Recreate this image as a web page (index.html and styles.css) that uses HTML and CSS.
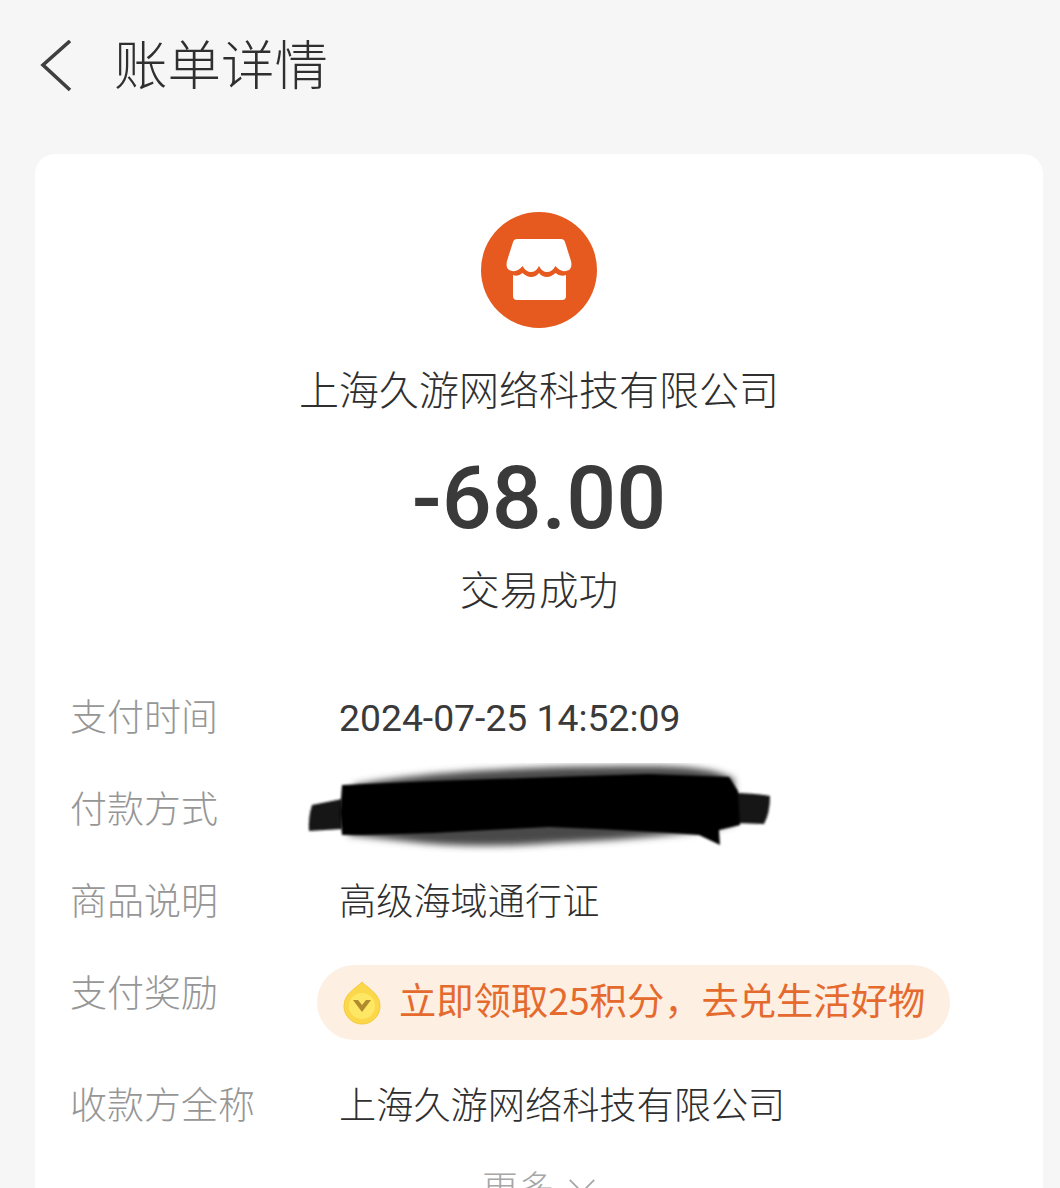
FILE: index.html
```html
<!DOCTYPE html>
<html lang="zh-CN">
<head>
<meta charset="utf-8">
<title>账单详情</title>
<link rel="stylesheet" href="styles.css">
</head>
<body>
<header class="topbar">
  <svg class="back" viewBox="0 0 34 54" width="34" height="54"><path d="M30 1 L3 25 L30 50" fill="none" stroke="#3f3f3f" stroke-width="3.600"/></svg>
  <h1 class="title">账单详情</h1>
</header>
<main class="card">
  <section class="summary">
    <svg class="shop" viewBox="0 0 116 116" width="116" height="116">
      <circle cx="58" cy="58" r="58" fill="#e6591f"/>
      <path d="M36 27 H80 Q83 27 84 30 L90 49 Q92 58 85 59 Q79 60 74.500 54 Q71 60 66 60 Q61 60 58 54 Q55 60 50 60 Q45 60 41.500 54 Q37 60 31 59 Q24 58 26 49 L32 30 Q33 27 36 27 Z" fill="#fff"/>
      <path d="M32 63 Q37 65 41.500 61 Q46 65 50 65 Q55 65 58 61 Q61 65 66 65 Q70 65 74.500 61 Q79 65 85 63 V84 Q85 88 81 88 H36 Q32 88 32 84 Z" fill="#fff"/>
    </svg>
    <div class="merchant">上海久游网络科技有限公司</div>
    <div class="amount">-68.00</div>
    <div class="status">交易成功</div>
  </section>
  <dl class="details">
    <div class="row"><dt>支付时间</dt><dd class="date">2024-07-25 14:52:09</dd></div>
    <div class="row"><dt>付款方式</dt><dd class="hidden-value">
      <svg class="scribble" viewBox="0 0 470 90" width="470" height="90">
        <defs><filter id="soft" x="-5%" y="-20%" width="110%" height="140%"><feGaussianBlur stdDeviation="1.200"/></filter><filter id="softer" x="-5%" y="-30%" width="110%" height="160%"><feGaussianBlur stdDeviation="3.500"/></filter></defs>
        <path d="M50 22 C120 8 230 3 340 3 C380 3 410 5 430 16 L432 60 C390 72 330 76 250 80 C200 84 150 84 100 78 L44 72 Z" fill="#4a4a4a" filter="url(#softer)"/>
        <path d="M8 42 L38 36 V66 L5 68 Q4 55 8 42 Z" fill="#151515" filter="url(#soft)"/>
        <path d="M430 30 Q450 30 466 33 Q466 50 460 61 L430 60 Z" fill="#151515" filter="url(#soft)"/>
        <path d="M38 22 L130 18 L280 13 L345 11 L425 14 L434 28 L436 62 L415 67 L416 82 L395 72 C340 68 290 66 245 64 L130 70 L60 72 L38 72 L36 50 Z" fill="#000" filter="url(#soft)"/>
      </svg>
    </dd></div>
    <div class="row"><dt>商品说明</dt><dd>高级海域通行证</dd></div>
    <div class="row row-reward"><dt>支付奖励</dt><dd>
      <div class="pill">
        <svg class="coin" viewBox="0 0 40 44" width="40" height="44">
          <path d="M20 1 C24 6 38 12 38 25 A18 18 0 0 1 2 25 C2 12 16 6 20 1 Z" fill="#fbd84a" stroke="#f6c93a" stroke-width="1"/>
          <circle cx="20" cy="25" r="13" fill="#ffe766"/>
          <path d="M11 19 L20 31 L29 19 L24 19 L20 24 L16 19 Z" fill="#b08a2c"/>
        </svg>
        <span class="pill-text">立即领取25积分，去兑生活好物</span>
      </div>
    </dd></div>
    <div class="row row-payee"><dt>收款方全称</dt><dd>上海久游网络科技有限公司</dd></div>
  </dl>
  <div class="more"><span>更多</span>
    <svg viewBox="0 0 32 20" width="28" height="18"><path d="M2 3 L16 17 L30 3" fill="none" stroke="#a6a6a6" stroke-width="2"/></svg>
  </div>
</main>
</body>
</html>
```
FILE: styles.css
```css
* { box-sizing: border-box; }
html, body { margin: 0; height: 1188px; overflow: hidden; }
body {
  background: #f6f6f6;
  color: #333;
  font-family: "Noto Sans CJK SC", "Noto Sans", sans-serif;
  font-weight: 300;
}
.topbar {
  height: 154px;
  display: flex;
  align-items: flex-start;
  padding: 40px 0 0 40px;
}
.title {
  margin: -21px 0 0 40px;
  font-size: 53.500px;
  font-weight: 300;
  line-height: 86px;
  color: #2f2f2f;
}
.card {
  width: 1008px;
  height: 1034px;
  margin-left: 35px;
  padding-top: 58px;
  overflow: hidden;
  background: #fff;
  border-radius: 20px 20px 0 0;
}
.summary { display: flex; flex-direction: column; align-items: center; }
.shop { display: block; }
.merchant { margin-top: 27px; font-size: 40px; line-height: 66px; color: #2f2f2f; }
.amount {
  margin-top: 27px;
  font-family: Roboto, sans-serif;
  font-size: 88px;
  font-weight: 500;
  line-height: 100px;
  color: #3a3a3a;
}
.status { margin-top: 7px; font-size: 39.500px; line-height: 66px; color: #2f2f2f; }
.details { margin: 62px 0 0; padding-left: 35px; }
.row { display: flex; height: 92px; align-items: flex-start; }
.row dt { width: 269px; flex: none; font-size: 37px; line-height: 64px; color: #969696; }
.row dd { margin: 0; font-size: 37.200px; line-height: 64px; color: #2f2f2f; }
.row .date { padding-top: 3px; font-family: Roboto, sans-serif; font-weight: 400; font-size: 37.300px; color: #3a3a3a; }
.row-reward { height: 112px; }
.hidden-value { position: relative; }
.scribble { position: absolute; left: -35px; top: -12px; }
.pill {
  display: flex;
  align-items: center;
  width: 633px;
  height: 75px;
  margin: 6px 0 0 -22px;
  padding-left: 25px;
  border-radius: 38px;
  background: #fdefe2;
  color: #e56a2e;
  font-size: 37.300px;
  font-weight: 400;
}
.pill-text { padding-bottom: 8px; }
.coin { flex: none; margin-right: 17px; }
.more {
  display: flex;
  align-items: center;
  justify-content: center;
  gap: 14px;
  margin-top: -7px;
  font-size: 36px;
  line-height: 60px;
  color: #a6a6a6;
}
```
